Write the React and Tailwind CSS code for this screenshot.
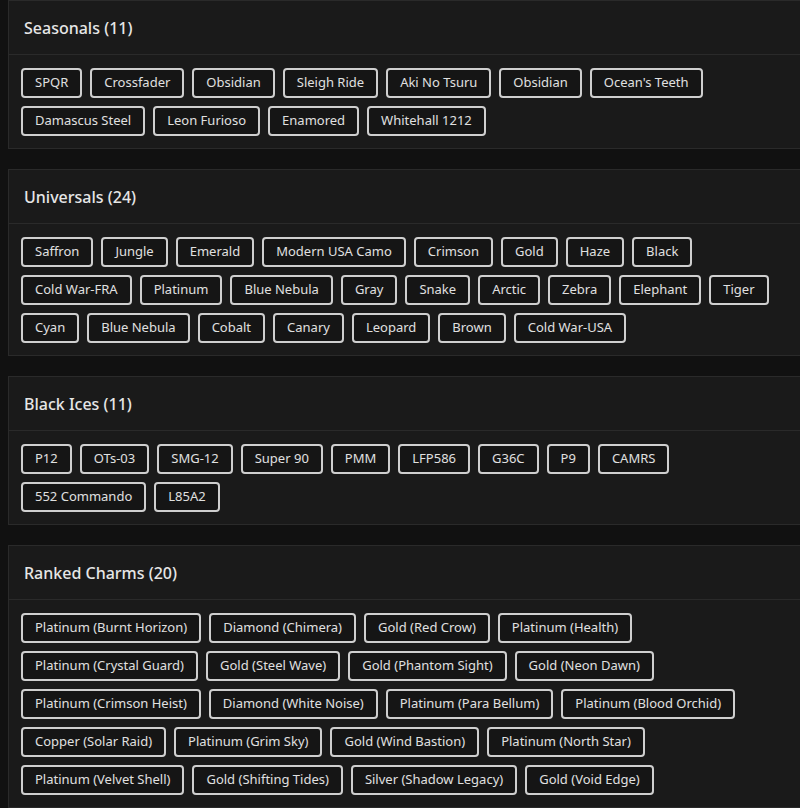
const sections = [
  {
    title: 'Seasonals',
    items: ['SPQR', 'Crossfader', 'Obsidian', 'Sleigh Ride', 'Aki No Tsuru', 'Obsidian', "Ocean's Teeth", 'Damascus Steel', 'Leon Furioso', 'Enamored', 'Whitehall 1212'],
  },
  {
    title: 'Universals',
    items: [
      'Saffron', 'Jungle', 'Emerald', 'Modern USA Camo', 'Crimson', 'Gold', 'Haze', 'Black',
      'Cold War-FRA', 'Platinum', 'Blue Nebula', 'Gray', 'Snake', 'Arctic', 'Zebra', 'Elephant', 'Tiger',
      'Cyan', 'Blue Nebula', 'Cobalt', 'Canary', 'Leopard', 'Brown', 'Cold War-USA',
    ],
  },
  {
    title: 'Black Ices',
    items: ['P12', 'OTs-03', 'SMG-12', 'Super 90', 'PMM', 'LFP586', 'G36C', 'P9', 'CAMRS', '552 Commando', 'L85A2'],
  },
  {
    title: 'Ranked Charms',
    items: [
      'Platinum (Burnt Horizon)', 'Diamond (Chimera)', 'Gold (Red Crow)', 'Platinum (Health)',
      'Platinum (Crystal Guard)', 'Gold (Steel Wave)', 'Gold (Phantom Sight)', 'Gold (Neon Dawn)',
      'Platinum (Crimson Heist)', 'Diamond (White Noise)', 'Platinum (Para Bellum)', 'Platinum (Blood Orchid)',
      'Copper (Solar Raid)', 'Platinum (Grim Sky)', 'Gold (Wind Bastion)', 'Platinum (North Star)',
      'Platinum (Velvet Shell)', 'Gold (Shifting Tides)', 'Silver (Shadow Legacy)', 'Gold (Void Edge)',
    ],
  },
];

function Section({ title, items }) {
  return (
    <section className="ml-2 w-[806px] shrink-0 border border-[#2a2a2a] bg-[#1a1a1a]">
      <div className="flex h-[54px] items-center border-b border-[#2a2a2a] px-[15px]">
        <h2 className="text-[16px] font-medium text-[#e6e6e6]">
          {title} ({items.length})
        </h2>
      </div>
      <div className="flex flex-wrap gap-2 px-3 pt-[13px] pb-3">
        {items.map((item, i) => (
          <span
            key={i}
            className="flex h-[30px] items-center rounded-[4px] border-2 border-[#cfcfcf] bg-[#151515] px-3 text-[13px] text-[#e0e0e0]"
          >
            {item}
          </span>
        ))}
      </div>
    </section>
  );
}

export default function App() {
  return (
    <div className="flex min-h-[808px] flex-col gap-5 overflow-hidden bg-[#111111] font-['Noto_Sans',sans-serif]">
      {sections.map((s) => (
        <Section key={s.title} {...s} />
      ))}
    </div>
  );
}
